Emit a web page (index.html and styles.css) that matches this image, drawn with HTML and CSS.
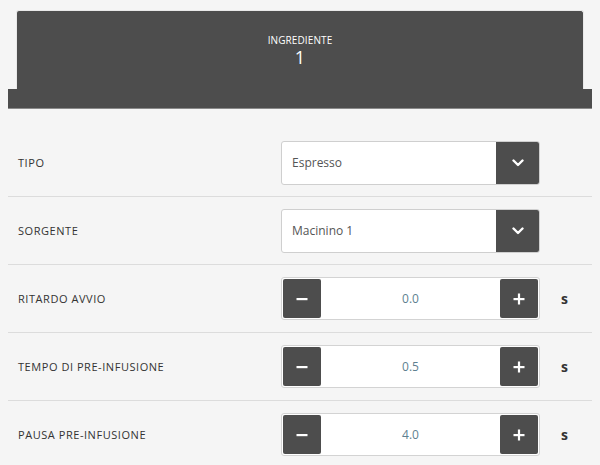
FILE: index.html
```html
<!DOCTYPE html>
<html lang="it">
<head>
<meta charset="utf-8">
<link rel="stylesheet" href="styles.css">
</head>
<body>
<header class="hdr">
  <div class="hdr-top">
    <div class="hdr-title">INGREDIENTE</div>
    <div class="hdr-num">1</div>
  </div>
  <div class="hdr-base"></div>
</header>
<main class="rows">
  <div class="row">
    <div class="label">TIPO</div>
    <div class="select">
      <span class="select-val">Espresso</span>
      <span class="select-btn"><svg width="12" height="8" viewBox="0 0 12 8"><path d="M1.5 1.5 L6 6 L10.5 1.5" fill="none" stroke="#fff" stroke-width="2.4" stroke-linecap="round" stroke-linejoin="round"/></svg></span>
    </div>
  </div>
  <div class="row">
    <div class="label">SORGENTE</div>
    <div class="select">
      <span class="select-val">Macinino 1</span>
      <span class="select-btn"><svg width="12" height="8" viewBox="0 0 12 8"><path d="M1.5 1.5 L6 6 L10.5 1.5" fill="none" stroke="#fff" stroke-width="2.4" stroke-linecap="round" stroke-linejoin="round"/></svg></span>
    </div>
  </div>
  <div class="row">
    <div class="label">RITARDO AVVIO</div>
    <div class="stepper">
      <span class="step-btn"><svg width="12" height="12" viewBox="0 0 12 12"><rect x="0.5" y="5" width="11" height="2.2" fill="#fff"/></svg></span>
      <span class="step-val">0.0</span>
      <span class="step-btn"><svg width="12" height="12" viewBox="0 0 12 12"><rect x="0.5" y="5" width="11" height="2.2" fill="#fff"/><rect x="4.9" y="0.5" width="2.2" height="11" fill="#fff"/></svg></span>
    </div>
    <div class="unit">s</div>
  </div>
  <div class="row">
    <div class="label">TEMPO DI PRE-INFUSIONE</div>
    <div class="stepper">
      <span class="step-btn"><svg width="12" height="12" viewBox="0 0 12 12"><rect x="0.5" y="5" width="11" height="2.2" fill="#fff"/></svg></span>
      <span class="step-val">0.5</span>
      <span class="step-btn"><svg width="12" height="12" viewBox="0 0 12 12"><rect x="0.5" y="5" width="11" height="2.2" fill="#fff"/><rect x="4.9" y="0.5" width="2.2" height="11" fill="#fff"/></svg></span>
    </div>
    <div class="unit">s</div>
  </div>
  <div class="row">
    <div class="label">PAUSA PRE-INFUSIONE</div>
    <div class="stepper">
      <span class="step-btn"><svg width="12" height="12" viewBox="0 0 12 12"><rect x="0.5" y="5" width="11" height="2.2" fill="#fff"/></svg></span>
      <span class="step-val">4.0</span>
      <span class="step-btn"><svg width="12" height="12" viewBox="0 0 12 12"><rect x="0.5" y="5" width="11" height="2.2" fill="#fff"/><rect x="4.9" y="0.5" width="2.2" height="11" fill="#fff"/></svg></span>
    </div>
    <div class="unit">s</div>
  </div>
</main>
</body>
</html>
```
FILE: styles.css
```css
html, body {
  background: #f5f5f5;
}
body {
  margin: 8px;
  font-family: "Open Sans", "Noto Sans", sans-serif;
  color: #333;
  overflow: hidden;
}
.hdr {
  margin-top: 2px;
}
.hdr-top {
  margin: 0 8px;
  height: 79px;
  background: #4d4d4d;
  border: 1px solid #e9e9e9;
  border-bottom: none;
  border-radius: 3px 3px 0 0;
  display: flex;
  flex-direction: column;
  align-items: center;
  color: #fff;
  padding-top: 23px;
  box-sizing: border-box;
}
.hdr-title {
  font-size: 10px;
  line-height: 12px;
  letter-spacing: 0.1px;
}
.hdr-num {
  margin-top: 2px;
  font-size: 18px;
  line-height: 18px;
  font-weight: 400;
}
.hdr-base {
  height: 19px;
  background: #4d4d4d;
  border-bottom: 1px solid #8a8a8a;
}
.rows {
  padding-top: 20px;
}
.row {
  height: 67px;
  border-bottom: 1px solid #dcdcdc;
  display: grid;
  grid-template-columns: 273px 259px auto;
  align-items: center;
}
.label {
  padding-left: 10px;
  font-size: 11px;
  color: #333;
  letter-spacing: 0.55px;
}
.select {
  height: 44px;
  box-sizing: border-box;
  background: #fff;
  border: 1px solid #cfcfcf;
  border-radius: 3px;
  display: flex;
  align-items: stretch;
  overflow: hidden;
}
.select-val {
  flex: 1;
  display: flex;
  align-items: center;
  padding-left: 10px;
  font-size: 12px;
  color: #555;
}
.select-btn {
  width: 43px;
  background: #4d4d4d;
  display: flex;
  align-items: center;
  justify-content: center;
}
.stepper {
  height: 43px;
  box-sizing: border-box;
  background: #fff;
  border: 1px solid #d3d3d3;
  border-radius: 3px;
  padding: 1px;
  display: flex;
  align-items: stretch;
}
.step-btn {
  width: 38px;
  background: #4d4d4d;
  border-radius: 2px;
  display: flex;
  align-items: center;
  justify-content: center;
}
.step-val {
  flex: 1;
  display: flex;
  align-items: center;
  justify-content: center;
  font-size: 12px;
  color: #5e7f90;
}
.unit {
  padding-left: 21px;
  font-size: 14px;
  font-weight: 700;
  color: #333;
}
```
